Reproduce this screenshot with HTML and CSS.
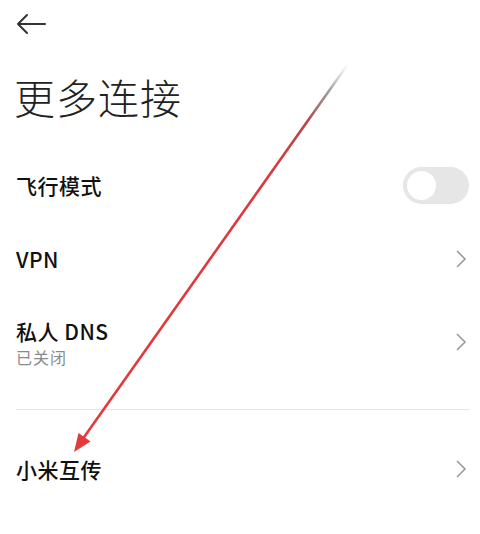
FILE: index.html
```html
<!DOCTYPE html>
<html lang="zh-CN">
<head>
    <meta charset="UTF-8">
    <meta name="viewport" content="width=device-width, initial-scale=1.0">
    <title>更多连接</title>
    <link rel="stylesheet" href="styles.css">
</head>
<body>
    <div class="page">
        <div class="topbar">
            <svg class="back" width="32" height="22" viewBox="0 0 32 22">
                <path d="M30 11H3M12 2L3 11l9 9" fill="none" stroke="#333" stroke-width="2" stroke-linecap="round" stroke-linejoin="round"/>
            </svg>
        </div>
        <h1 class="title">更多连接</h1>

        <div class="row row-switch">
            <div class="label">飞行模式</div>
            <div class="toggle"><span class="knob"></span></div>
        </div>

        <div class="row">
            <div class="label">VPN</div>
            <svg class="chevron" width="12" height="20" viewBox="0 0 12 20"><path d="M2 2l8 8-8 8" fill="none" stroke="#9a9a9a" stroke-width="1.6"/></svg>
        </div>

        <div class="row row-tall">
            <div class="texts">
                <div class="label">私人 DNS</div>
                <div class="sub">已关闭</div>
            </div>
            <svg class="chevron" width="12" height="20" viewBox="0 0 12 20"><path d="M2 2l8 8-8 8" fill="none" stroke="#9a9a9a" stroke-width="1.6"/></svg>
        </div>

        <div class="divider"></div>

        <div class="row">
            <div class="label">小米互传</div>
            <svg class="chevron" width="12" height="20" viewBox="0 0 12 20"><path d="M2 2l8 8-8 8" fill="none" stroke="#9a9a9a" stroke-width="1.6"/></svg>
        </div>

        <!-- annotation drawn over the screenshot -->
        <svg class="annotation" width="480" height="534" viewBox="0 0 480 534">
            <defs>
                <linearGradient id="fade" x1="348" y1="64" x2="80" y2="446" gradientUnits="userSpaceOnUse">
                    <stop offset="0" stop-color="#999" stop-opacity="0"/>
                    <stop offset="0.07" stop-color="#777" stop-opacity="0.7"/>
                    <stop offset="0.15" stop-color="#b84448"/>
                    <stop offset="0.3" stop-color="#dc383c"/>
                    <stop offset="1" stop-color="#e23a3d"/>
                </linearGradient>
            </defs>
            <line x1="348" y1="64" x2="82" y2="440" stroke="url(#fade)" stroke-width="2.6"/>
            <polygon points="74,452 90.5,441.5 78.5,433" fill="#e23a3d"/>
        </svg>
    </div>
</body>
</html>
```

FILE: styles.css
```css
body, html {
    margin: 0;
    background-color: #fff;
    font-family: "Noto Sans CJK SC", "Noto Sans", sans-serif;
    color: #111;
    overflow: hidden;
}

.page {
    position: relative;
    width: 480px;
    height: 534px;
}

.topbar {
    height: 48px;
    display: flex;
    align-items: center;
    padding-left: 15px;
}

.title {
    margin: 0;
    height: 100px;
    line-height: 96px;
    padding-left: 14px;
    font-size: 41px;
    font-weight: 300;
    color: #222;
    letter-spacing: 1px;
}

.row {
    height: 74px;
    display: flex;
    align-items: center;
    justify-content: space-between;
    padding: 0 13px 0 16px;
}

.row-tall {
    height: 92px;
}

.label {
    font-size: 21px;
    font-weight: 500;
    color: #111;
    line-height: 28px;
    letter-spacing: 0.5px;
}

.sub {
    font-size: 16px;
    color: #8a8a8a;
    line-height: 22px;
    margin-top: 1px;
    letter-spacing: 1px;
}

.toggle {
    width: 66px;
    height: 37px;
    border-radius: 19px;
    background-color: #e6e6e6;
    display: flex;
    align-items: center;
    padding-left: 4px;
    box-sizing: border-box;
    margin-right: -2px;
}

.knob {
    width: 29px;
    height: 29px;
    border-radius: 50%;
    background-color: #fff;
}

.divider {
    height: 1px;
    background-color: #e6e6e6;
    margin: 21px 11px 22px 16px;
}

.annotation {
    position: absolute;
    top: 0;
    left: 0;
    pointer-events: none;
}
```
